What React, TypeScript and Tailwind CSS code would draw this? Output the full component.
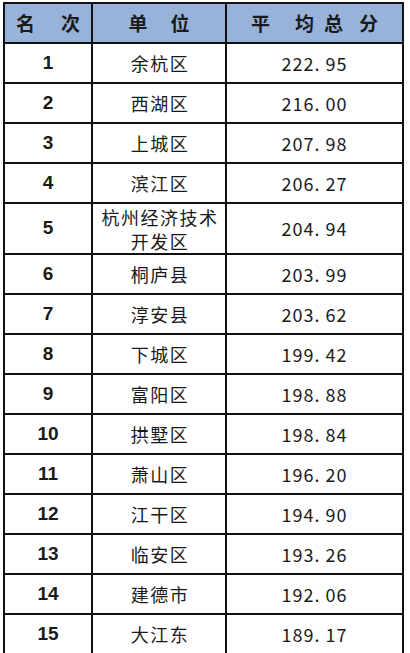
const rows: { rank: number; name: string; score: string }[] = [
  { rank: 1, name: "余杭区", score: "222.95" },
  { rank: 2, name: "西湖区", score: "216.00" },
  { rank: 3, name: "上城区", score: "207.98" },
  { rank: 4, name: "滨江区", score: "206.27" },
  { rank: 5, name: "杭州经济技术开发区", score: "204.94" },
  { rank: 6, name: "桐庐县", score: "203.99" },
  { rank: 7, name: "淳安县", score: "203.62" },
  { rank: 8, name: "下城区", score: "199.42" },
  { rank: 9, name: "富阳区", score: "198.88" },
  { rank: 10, name: "拱墅区", score: "198.84" },
  { rank: 11, name: "萧山区", score: "196.20" },
  { rank: 12, name: "江干区", score: "194.90" },
  { rank: 13, name: "临安区", score: "193.26" },
  { rank: 14, name: "建德市", score: "192.06" },
  { rank: 15, name: "大江东", score: "189.17" },
];

const cell = "border-2 border-[#111] text-center align-middle p-0";

export default function App() {
  return (
    <div
      className="min-h-[653px] w-[410px] bg-white pl-[3px] pt-[2px]"
      style={{ fontFamily: '"Noto Sans CJK SC", "Liberation Sans", sans-serif' }}
    >
      <table className="w-[401px] table-fixed border-collapse text-[18px] text-[#1a1a1a]">
        <colgroup>
          <col className="w-[88px]" />
          <col className="w-[134px]" />
          <col />
        </colgroup>
        <thead>
          <tr className="h-[40px] bg-[#97b3da] text-[19px] font-bold">
            <th className={cell}>
              <span className="inline-flex items-center">
                <span>名</span>
                <span className="ml-[26px]">次</span>
              </span>
            </th>
            <th className={cell}>
              <span className="inline-flex items-center">
                <span>单</span>
                <span className="ml-[23px]">位</span>
              </span>
            </th>
            <th className={cell}>
              <span className="inline-flex items-center">
                <span>平</span>
                <span className="ml-[25px]">均</span>
                <span className="ml-[10px]">总</span>
                <span className="ml-[16px]">分</span>
              </span>
            </th>
          </tr>
        </thead>
        <tbody>
          {rows.map((r) => (
            <tr key={r.rank} className={r.rank === 5 ? "h-[51px]" : "h-[40px]"}>
              <td
                className={`${cell} text-[19px] font-bold`}
                style={{ fontFamily: '"Liberation Sans", sans-serif' }}
              >
                {r.rank}
              </td>
              <td className={`${cell} pl-[2px] leading-[24px] tracking-[1.5px]`}>
                {r.rank === 5 ? (
                  <>
                    杭州经济技术
                    <br />
                    开发区
                  </>
                ) : (
                  r.name
                )}
              </td>
              <td className={`${cell} tracking-[1px]`}>{r.score.replace(".", ". ")}</td>
            </tr>
          ))}
        </tbody>
      </table>
    </div>
  );
}
